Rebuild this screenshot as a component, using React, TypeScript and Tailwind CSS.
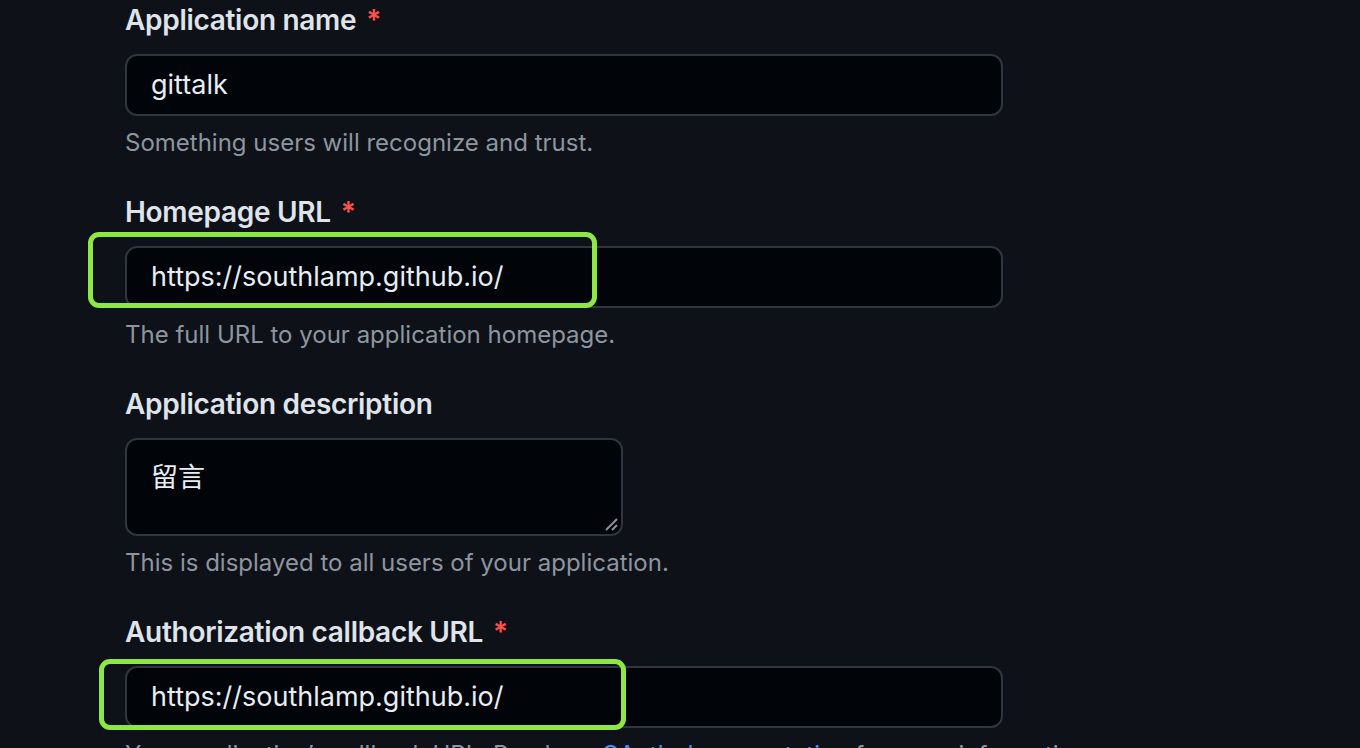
import React from "react";

const font = { fontFamily: "Inter, 'Noto Sans CJK SC', sans-serif" };

function Label({ text, required }: { text: string; required?: boolean }) {
  return (
    <div className="h-[40px] flex items-center text-[28px] font-semibold text-[#dfe4ea] tracking-[-0.3px]">
      {text}
      {required && <span className="ml-[10px] text-[#f85149]">*</span>}
    </div>
  );
}

function Help({ children }: { children: React.ReactNode }) {
  return (
    <div className="mt-[9px] h-[36px] flex items-center text-[24px] text-[#8d96a0] whitespace-nowrap">
      {children}
    </div>
  );
}

function Input({ value, mark }: { value: string; mark?: string }) {
  return (
    <div className="relative mt-[14px] w-[878px] h-[62px] rounded-[12px] border-2 border-[#30363d] bg-[#010409] flex items-center pl-[24px] text-[27px] text-[#e6edf3]">
      {value}
      {mark === "a" && (
        <div className="absolute left-[-39px] top-[-16px] w-[509px] h-[76px] rounded-[11px] border-[5px] border-[#8de846]" />
      )}
      {mark === "b" && (
        <div className="absolute left-[-28px] top-[-9px] w-[527px] h-[71px] rounded-[11px] border-[5px] border-[#8de846]" />
      )}
    </div>
  );
}

export default function App() {
  return (
    <div className="min-h-screen bg-[#0e1117] overflow-hidden" style={font}>
      <div className="h-[748px] overflow-hidden pl-[125px]">
        <div>
          <Label text="Application name" required />
          <Input value="gittalk" />
          <Help>Something users will recognize and trust.</Help>
        </div>

        <div className="mt-[31px]">
          <Label text="Homepage URL" required />
          <Input value="https://southlamp.github.io/" mark="a" />
          <Help>The full URL to your application homepage.</Help>
        </div>

        <div className="mt-[31px]">
          <Label text="Application description" />
          <div className="relative mt-[14px] w-[498px] h-[98px] rounded-[12px] border-2 border-[#30363d] bg-[#010409] pl-[24px] pt-[18px] text-[27px] leading-[40px] text-[#e6edf3]">
            留言
            <svg className="absolute right-[3px] bottom-[3px]" width="14" height="14" viewBox="0 0 14 14">
              <path d="M2 13 L13 2 M8 13 L13 8" stroke="#8b8f96" strokeWidth="2" />
            </svg>
          </div>
          <Help>This is displayed to all users of your application.</Help>
        </div>

        <div className="mt-[31px]">
          <Label text="Authorization callback URL" required />
          <Input value="https://southlamp.github.io/" mark="b" />
          <Help>
            Your application’s callback URL. Read our&nbsp;
            <span className="text-[#4493f8]">OAuth documentation</span>
            &nbsp;for more information.
          </Help>
        </div>
      </div>
    </div>
  );
}
